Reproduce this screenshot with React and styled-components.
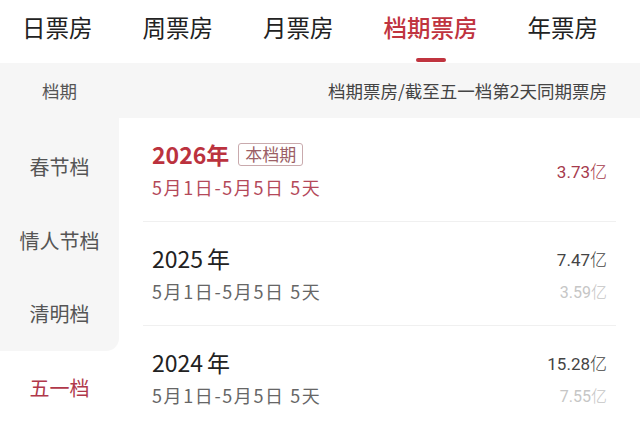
import React from "react";
import styled, { createGlobalStyle } from "styled-components";

const GlobalStyle = createGlobalStyle`
    body {
        margin: 0;
        background: #fff;
        font-family: "Noto Sans CJK SC", "Noto Sans", sans-serif;
    }
`;

const RED = "#bb323e";

const Page = styled.div`
    width: 640px;
    height: 422px;
    overflow: hidden;
    background: #fff;
    display: flex;
    flex-direction: column;
`;

const TabBar = styled.div`
    display: flex;
    gap: 50px;
    height: 63px;
    padding-left: 22px;
    background: #fff;
`;

const Tab = styled.div`
    display: flex;
    flex-direction: column;
    align-items: center;
    padding-top: 13px;
    font-size: 23.5px;
    line-height: 28px;
    color: ${p => (p.$active ? "#c0343f" : "#222")};
    font-weight: ${p => (p.$active ? 500 : 400)};
`;

const Indicator = styled.div`
    width: 30px;
    height: 4px;
    margin-top: 17px;
    border-radius: 2px;
    background: #c0343f;
`;

const HeaderBand = styled.div`
    display: flex;
    align-items: center;
    justify-content: space-between;
    height: 55px;
    padding-right: 33px;
    background: #f6f6f6;
    font-size: 17.5px;
`;

const HeaderLabel = styled.div`
    width: 119px;
    text-align: center;
    color: #555;
`;

const HeaderNote = styled.div`
    color: #444;
`;

const Body = styled.div`
    flex: 1;
    display: flex;
    min-height: 0;
`;

const SideList = styled.div`
    width: 119px;
    flex-shrink: 0;
    display: flex;
    flex-direction: column;
    background: #fff;
`;

const SideItem = styled.div`
    display: flex;
    align-items: center;
    justify-content: center;
    height: 73.5px;
    padding-top: ${p => (p.$first ? "12px" : "0")};
    flex-shrink: 0;
    font-size: 20px;
    color: ${p => (p.$active ? "#b0384a" : "#555")};
    background: ${p => (p.$active ? "#fff" : "#f6f6f6")};
    border-bottom-right-radius: ${p => (p.$beforeActive ? "13px" : "0")};
`;

const Content = styled.div`
    flex: 1;
    padding: 0 24px;
    background: #fff;
`;

const Row = styled.div`
    display: flex;
    justify-content: space-between;
    height: 104px;
    padding: 0 9px 0 9px;
    box-sizing: border-box;
    border-bottom: 1px solid #f0f0f0;
`;

const RowMain = styled.div`
    display: flex;
    flex-direction: column;
    padding-top: 21px;
`;

const TitleLine = styled.div`
    display: flex;
    align-items: center;
    height: 30px;
`;

const Year = styled.span`
    font-size: 23px;
    color: ${p => (p.$current ? RED : "#222")};
    font-weight: ${p => (p.$current ? 700 : 400)};
`;

const YearUnit = styled.span`
    margin-left: ${p => (p.$current ? "0" : "4px")};
`;

const Badge = styled.span`
    margin-left: 9px;
    padding: 0 6px;
    height: 21px;
    line-height: 20px;
    font-size: 17px;
    color: #9c5f66;
    border: 1px solid #c9aaad;
    border-radius: 3px;
`;

const DateLine = styled.div`
    margin-top: 6px;
    height: 24px;
    line-height: 24px;
    font-size: 18px;
    letter-spacing: 1.6px;
    color: ${p => (p.$current ? "#b4495a" : "#666")};
`;

const RowSide = styled.div`
    display: flex;
    flex-direction: column;
    justify-content: center;
    align-items: flex-end;
    gap: 3px;
    padding-top: 4px;
`;

const Amount = styled.div`
    line-height: 28px;
    font-family: "Roboto", "Noto Sans CJK SC", sans-serif;
    font-size: ${p => (p.$secondary ? "16px" : "17px")};
    color: ${p => (p.$secondary ? "#c6c6c6" : p.$current ? "#a63a4c" : "#444")};
`;

const Unit = styled.span`
    font-family: "Noto Sans CJK SC", sans-serif;
    font-weight: 300;
`;

const tabs = ["日票房", "周票房", "月票房", "档期票房", "年票房"];
const seasons = ["春节档", "情人节档", "清明档", "五一档"];

const rows = [
    { year: "2026", current: true, range: "5月1日-5月5日 5天", total: "3.73" },
    { year: "2025", range: "5月1日-5月5日 5天", total: "7.47", same: "3.59" },
    { year: "2024", range: "5月1日-5月5日 5天", total: "15.28", same: "7.55" }
];

export default function App() {
    const activeTab = 3;
    const activeSeason = 3;

    return (
        <Page>
            <GlobalStyle />
            <TabBar>
                {tabs.map((t, i) => (
                    <Tab key={t} $active={i === activeTab}>
                        {t}
                        {i === activeTab && <Indicator />}
                    </Tab>
                ))}
            </TabBar>
            <HeaderBand>
                <HeaderLabel>档期</HeaderLabel>
                <HeaderNote>档期票房/截至五一档第2天同期票房</HeaderNote>
            </HeaderBand>
            <Body>
                <SideList>
                    {seasons.map((s, i) => (
                        <SideItem
                            key={s}
                            $first={i === 0}
                            $active={i === activeSeason}
                            $beforeActive={i === activeSeason - 1}
                        >
                            {s}
                        </SideItem>
                    ))}
                </SideList>
                <Content>
                    {rows.map(r => (
                        <Row key={r.year}>
                            <RowMain>
                                <TitleLine>
                                    <Year $current={r.current}>
                                        {r.year}
                                        <YearUnit $current={r.current}>年</YearUnit>
                                    </Year>
                                    {r.current && <Badge>本档期</Badge>}
                                </TitleLine>
                                <DateLine $current={r.current}>{r.range}</DateLine>
                            </RowMain>
                            <RowSide>
                                <Amount $current={r.current}>
                                    {r.total}
                                    <Unit>亿</Unit>
                                </Amount>
                                {r.same && (
                                    <Amount $secondary>
                                        {r.same}
                                        <Unit>亿</Unit>
                                    </Amount>
                                )}
                            </RowSide>
                        </Row>
                    ))}
                </Content>
            </Body>
        </Page>
    );
}
